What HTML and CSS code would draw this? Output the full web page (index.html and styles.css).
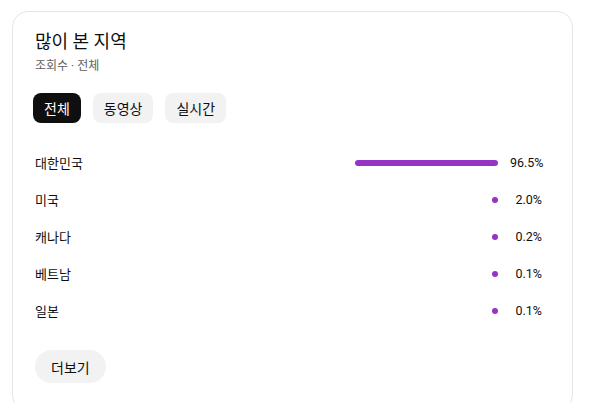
FILE: index.html
```html
<!DOCTYPE html>
<html lang="ko">
<head>
<meta charset="utf-8">
<link rel="stylesheet" href="styles.css">
</head>
<body>
<section class="card">
  <h2 class="title">많이 본 지역</h2>
  <div class="subtitle">조회수 · 전체</div>
  <div class="chips">
    <button class="chip active">전체</button>
    <button class="chip">동영상</button>
    <button class="chip">실시간</button>
  </div>
  <div class="rows">
    <div class="row"><span class="name">대한민국</span><span class="track"><span class="fill" style="width:96.5%"></span></span><span class="pct">96.5%</span></div>
    <div class="row"><span class="name">미국</span><span class="track"><span class="fill" style="width:2.0%"></span></span><span class="pct">2.0%</span></div>
    <div class="row"><span class="name">캐나다</span><span class="track"><span class="fill" style="width:0.2%"></span></span><span class="pct">0.2%</span></div>
    <div class="row"><span class="name">베트남</span><span class="track"><span class="fill" style="width:0.1%"></span></span><span class="pct">0.1%</span></div>
    <div class="row"><span class="name">일본</span><span class="track"><span class="fill" style="width:0.1%"></span></span><span class="pct">0.1%</span></div>
  </div>
  <button class="more">더보기</button>
</section>
</body>
</html>
```
FILE: styles.css
```css
* { box-sizing: border-box; }
html, body { margin: 0; padding: 0; background: #fff; }
body {
  font-family: Roboto, "Noto Sans CJK KR", sans-serif;
  color: #0f0f0f;
  padding: 11px 0 0 12px;
}
.card {
  width: 561px;
  height: 400px;
  border: 1px solid #e6e6e6;
  border-radius: 16px;
  padding: 18px 30px 0 22px;
}
.title {
  margin: 0;
  font-size: 18px;
  font-weight: 400;
  line-height: 24px;
}
.subtitle {
  font-size: 12px;
  line-height: 18px;
  color: #606060;
  margin-top: 3px;
}
.chips {
  display: flex;
  gap: 12px;
  margin-top: 18px;
  margin-left: -2px;
}
.chip {
  font-family: inherit;
  font-size: 14px;
  font-weight: 400;
  height: 30px;
  padding: 0 11px;
  border: none;
  border-radius: 8px;
  background: #f2f2f2;
  color: #0f0f0f;
}
.chip.active { background: #0f0f0f; color: #fff; }
.rows {
  margin-top: 21px;
  display: flex;
  flex-direction: column;
}
.row {
  display: grid;
  grid-template-columns: 1fr 148px 32px;
  column-gap: 12px;
  align-items: center;
  height: 37px;
  font-size: 13px;
}
.track {
  display: flex;
  justify-content: flex-end;
}
.fill {
  display: block;
  height: 6px;
  min-width: 6px;
  border-radius: 3px;
  background: #9334c6;
}
.pct { text-align: right; font-size: 12.5px; }
.more {
  margin-top: 21px;
  font-family: inherit;
  font-size: 14px;
  font-weight: 400;
  height: 33px;
  padding: 0 16px;
  border: none;
  border-radius: 17px;
  background: #f2f2f2;
  color: #0f0f0f;
}
```
